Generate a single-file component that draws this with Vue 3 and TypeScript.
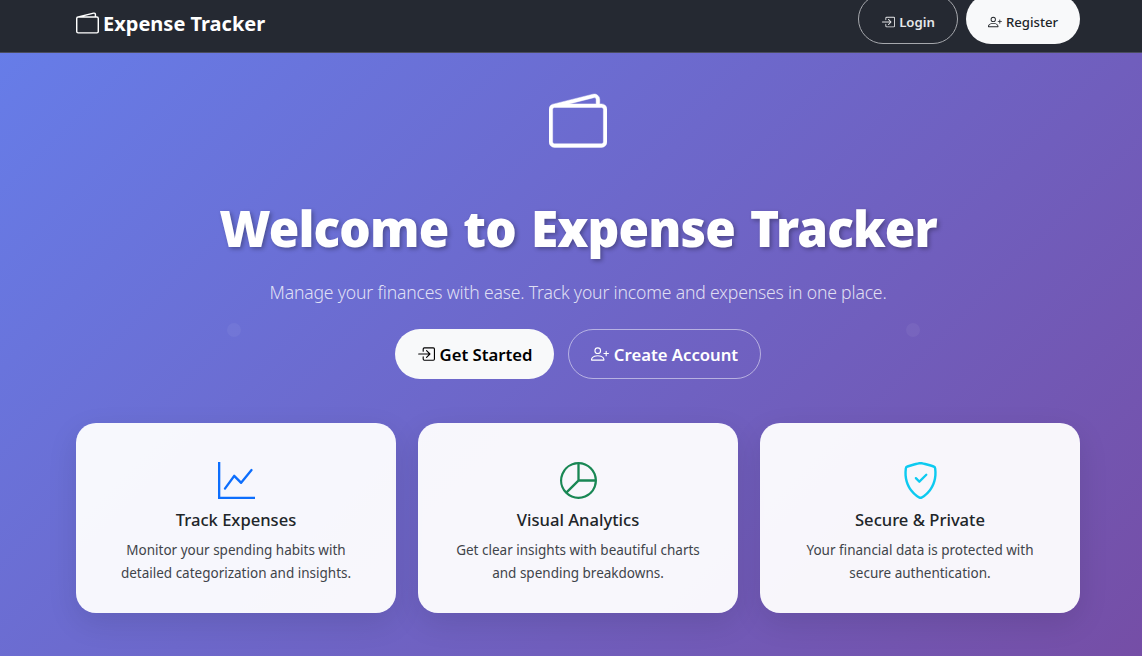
<script setup lang="ts">
const features = [
  { title: 'Track Expenses', lines: ['Monitor your spending habits with', 'detailed categorization and insights.'], icon: 'graph', color: '#0d6efd' },
  { title: 'Visual Analytics', lines: ['Get clear insights with beautiful charts', 'and spending breakdowns.'], icon: 'pie', color: '#198754' },
  { title: 'Secure & Private', lines: ['Your financial data is protected with', 'secure authentication.'], icon: 'shield', color: '#0dcaf0' },
]
</script>

<template>
  <div class="page">
    <nav class="nav">
      <div class="brand">
        <svg class="brand-icon" viewBox="0 0 16 16" fill="currentColor"><path d="M12.136.326A1.5 1.5 0 0 1 14 1.78V3h.5A1.5 1.5 0 0 1 16 4.5v9a1.5 1.5 0 0 1-1.5 1.5h-13A1.5 1.5 0 0 1 0 13.5v-9a1.5 1.5 0 0 1 1.432-1.499zM5.562 3H13V1.78a.5.5 0 0 0-.621-.484zM1.5 4a.5.5 0 0 0-.5.5v9a.5.5 0 0 0 .5.5h13a.5.5 0 0 0 .5-.5v-9a.5.5 0 0 0-.5-.5z"/></svg>
        <span>Expense Tracker</span>
      </div>
      <div class="nav-actions">
        <a class="btn-nav outline">
          <svg class="ic-sm" viewBox="0 0 16 16" fill="currentColor"><path fill-rule="evenodd" d="M6 3.5a.5.5 0 0 1 .5-.5h8a.5.5 0 0 1 .5.5v9a.5.5 0 0 1-.5.5h-8a.5.5 0 0 1-.5-.5v-2a.5.5 0 0 0-1 0v2A1.5 1.5 0 0 0 6.5 14h8a1.5 1.5 0 0 0 1.5-1.5v-9A1.5 1.5 0 0 0 14.5 2h-8A1.5 1.5 0 0 0 5 3.5v2a.5.5 0 0 0 1 0z"/><path fill-rule="evenodd" d="M11.854 8.354a.5.5 0 0 0 0-.708l-3-3a.5.5 0 1 0-.708.708L10.293 7.5H1.5a.5.5 0 0 0 0 1h8.793l-2.147 2.146a.5.5 0 0 0 .708.708z"/></svg>
          Login
        </a>
        <a class="btn-nav solid">
          <svg class="ic-sm" viewBox="0 0 16 16" fill="currentColor"><path d="M6 8a3 3 0 1 0 0-6 3 3 0 0 0 0 6m2-3a2 2 0 1 1-4 0 2 2 0 0 1 4 0m4 8c0 1-1 1-1 1H1s-1 0-1-1 1-4 6-4 6 3 6 4m-1-.004c-.001-.246-.154-.986-.832-1.664C9.516 10.68 8.289 10 6 10s-3.516.68-4.168 1.332c-.678.678-.83 1.418-.832 1.664z"/><path fill-rule="evenodd" d="M13.5 5a.5.5 0 0 1 .5.5V7h1.5a.5.5 0 0 1 0 1H14v1.5a.5.5 0 0 1-1 0V8h-1.5a.5.5 0 0 1 0-1H13V5.5a.5.5 0 0 1 .5-.5"/></svg>
          Register
        </a>
      </div>
    </nav>

    <main class="hero">
      <span class="dot dot-left"></span>
      <span class="dot dot-right"></span>
      <svg class="hero-icon" viewBox="0 0 16 16" fill="currentColor"><path d="M12.136.326A1.5 1.5 0 0 1 14 1.78V3h.5A1.5 1.5 0 0 1 16 4.5v9a1.5 1.5 0 0 1-1.5 1.5h-13A1.5 1.5 0 0 1 0 13.5v-9a1.5 1.5 0 0 1 1.432-1.499zM5.562 3H13V1.78a.5.5 0 0 0-.621-.484zM1.5 4a.5.5 0 0 0-.5.5v9a.5.5 0 0 0 .5.5h13a.5.5 0 0 0 .5-.5v-9a.5.5 0 0 0-.5-.5z"/></svg>
      <h1 class="title">Welcome to Expense Tracker</h1>
      <p class="lead">Manage your finances with ease. Track your income and expenses in one place.</p>
      <div class="cta">
        <a class="btn-lg solid">
          <svg class="ic-md" viewBox="0 0 16 16" fill="currentColor"><path fill-rule="evenodd" d="M6 3.5a.5.5 0 0 1 .5-.5h8a.5.5 0 0 1 .5.5v9a.5.5 0 0 1-.5.5h-8a.5.5 0 0 1-.5-.5v-2a.5.5 0 0 0-1 0v2A1.5 1.5 0 0 0 6.5 14h8a1.5 1.5 0 0 0 1.5-1.5v-9A1.5 1.5 0 0 0 14.5 2h-8A1.5 1.5 0 0 0 5 3.5v2a.5.5 0 0 0 1 0z"/><path fill-rule="evenodd" d="M11.854 8.354a.5.5 0 0 0 0-.708l-3-3a.5.5 0 1 0-.708.708L10.293 7.5H1.5a.5.5 0 0 0 0 1h8.793l-2.147 2.146a.5.5 0 0 0 .708.708z"/></svg>
          Get Started
        </a>
        <a class="btn-lg ghost">
          <svg class="ic-md" viewBox="0 0 16 16" fill="currentColor"><path d="M6 8a3 3 0 1 0 0-6 3 3 0 0 0 0 6m2-3a2 2 0 1 1-4 0 2 2 0 0 1 4 0m4 8c0 1-1 1-1 1H1s-1 0-1-1 1-4 6-4 6 3 6 4m-1-.004c-.001-.246-.154-.986-.832-1.664C9.516 10.68 8.289 10 6 10s-3.516.68-4.168 1.332c-.678.678-.83 1.418-.832 1.664z"/><path fill-rule="evenodd" d="M13.5 5a.5.5 0 0 1 .5.5V7h1.5a.5.5 0 0 1 0 1H14v1.5a.5.5 0 0 1-1 0V8h-1.5a.5.5 0 0 1 0-1H13V5.5a.5.5 0 0 1 .5-.5"/></svg>
          Create Account
        </a>
      </div>
      <section class="cards">
        <article v-for="f in features" :key="f.title" class="card">
          <svg class="card-icon" viewBox="0 0 16 16" fill="currentColor" :style="{ color: f.color }">
            <template v-if="f.icon === 'graph'">
              <path fill-rule="evenodd" d="M0 0h1v15h15v1H0zm14.817 3.113a.5.5 0 0 1 .07.704l-4.5 5.5a.5.5 0 0 1-.74.037L7.06 6.767l-3.656 5.027a.5.5 0 0 1-.808-.588l4-5.5a.5.5 0 0 1 .758-.06l2.609 2.61 4.15-5.073a.5.5 0 0 1 .704-.07"/>
            </template>
            <template v-else-if="f.icon === 'pie'">
              <path d="M7.5 1.018a7 7 0 0 0-4.79 11.566L7.5 7.793zm1 0V7.5h6.482A7 7 0 0 0 8.5 1.018M14.982 8.5H8.207l-4.79 4.79A7 7 0 0 0 14.982 8.5M0 8a8 8 0 1 1 16 0A8 8 0 0 1 0 8"/>
            </template>
            <template v-else>
              <path d="M5.338 1.59a61 61 0 0 0-2.837.856.48.48 0 0 0-.328.39c-.554 4.157.726 7.19 2.253 9.188a10.7 10.7 0 0 0 2.287 2.233c.346.244.652.42.893.533q.18.085.293.118a1 1 0 0 0 .101.025 1 1 0 0 0 .1-.025q.114-.034.294-.118c.24-.113.547-.29.893-.533a10.7 10.7 0 0 0 2.287-2.233c1.527-1.997 2.807-5.031 2.253-9.188a.48.48 0 0 0-.328-.39c-.651-.213-1.75-.56-2.837-.855C9.552 1.29 8.531 1.067 8 1.067c-.53 0-1.552.223-2.662.524zM5.072.56C6.157.265 7.31 0 8 0s1.843.265 2.928.56c1.11.3 2.229.655 2.887.87a1.54 1.54 0 0 1 1.044 1.262c.596 4.477-.787 7.795-2.465 9.99a11.8 11.8 0 0 1-2.517 2.453 7 7 0 0 1-1.048.625c-.28.132-.581.24-.829.24s-.548-.108-.829-.24a7 7 0 0 1-1.048-.625 11.8 11.8 0 0 1-2.517-2.453C1.928 10.487.545 7.169 1.141 2.692A1.54 1.54 0 0 1 2.185 1.43 63 63 0 0 1 5.072.56"/>
              <path d="M10.854 5.146a.5.5 0 0 1 0 .708l-3 3a.5.5 0 0 1-.708 0l-1.5-1.5a.5.5 0 1 1 .708-.708L7.5 7.793l2.646-2.647a.5.5 0 0 1 .708 0"/>
            </template>
          </svg>
          <h3 class="card-title">{{ f.title }}</h3>
          <p class="card-text"><span v-for="l in f.lines" :key="l" class="line">{{ l }}</span></p>
        </article>
      </section>
    </main>
  </div>
</template>

<style>
html, body { margin: 0; padding: 0; overflow: hidden; }
</style>

<style scoped>
.page {
  width: 1142px;
  height: 656px;
  overflow: hidden;
  font-family: "Noto Sans", "Open Sans", sans-serif;
  background: linear-gradient(135deg, #667eea 0%, #764ba2 106%);
  display: flex;
  flex-direction: column;
}
.nav {
  flex: none;
  height: 53px;
  box-sizing: border-box;
  border-bottom: 1px solid #4a4c5e;
  background: #252932;
  display: flex;
  align-items: flex-end;
  justify-content: space-between;
  padding: 0 62px 8px 76px;
}
.brand {
  display: flex;
  align-items: center;
  gap: 4px;
  color: #fff;
  font-size: 20px;
  font-weight: 700;
  align-self: flex-start;
  height: 46px;
}
.brand-icon { width: 23px; height: 23px; }
.nav-actions { display: flex; gap: 8px; }
.btn-nav {
  box-sizing: border-box;
  height: 50px;
  padding-top: 6px;
  border-radius: 25px;
  margin-top: -6px;
  display: inline-flex;
  align-items: center;
  justify-content: center;
  gap: 4px;
  font-size: 13.2px;
  font-weight: 600;
}
.btn-nav.outline { width: 100px; border: 1px solid #a6a8ad; color: #e7e8ea; }
.btn-nav.solid { width: 114px; background: #f8f9fa; color: #212529; font-weight: 500; }
.ic-sm { width: 14px; height: 14px; }
.ic-md { width: 18px; height: 18px; }
.hero {
  position: relative;
  flex: 1;
  display: flex;
  flex-direction: column;
  align-items: center;
  padding: 40px 62px 0 76px;
  color: #fff;
}
.dot {
  position: absolute;
  width: 14px;
  height: 14px;
  border-radius: 50%;
  background: rgba(255, 255, 255, 0.05);
  top: 270px;
}
.dot-left { left: 227px; }
.dot-right { left: 906px; }
.hero-icon { width: 58px; height: 58px; flex: none; stroke: currentColor; stroke-width: 0.12; }
.title {
  margin: 47px 0 0;
  font-size: 50px;
  line-height: 60px;
  font-weight: 900;
  letter-spacing: -0.87px;
  word-spacing: 3px;
  font-size: 49.5px;
  text-shadow: 2px 2px 4px rgba(0, 0, 0, 0.3);
  white-space: nowrap;
}
.lead {
  margin: 21px 0 0;
  font-size: 17.6px;
  line-height: 27px;
  font-weight: 300;
  letter-spacing: -0.18px;
  color: rgba(255, 255, 255, 0.8);
}
.cta { display: flex; gap: 14px; margin-top: 23px; }
.btn-lg {
  box-sizing: border-box;
  height: 50px;
  border-radius: 25px;
  display: inline-flex;
  align-items: center;
  justify-content: center;
  gap: 5px;
  font-size: 16.7px;
  font-weight: 600;
}
.btn-lg.solid { width: 159px; background: #f8f9fa; color: #000; }
.btn-lg.ghost { width: 193px; border: 1px solid rgba(255, 255, 255, 0.5); color: #fff; }
.cards {
  align-self: stretch;
  display: grid;
  grid-template-columns: repeat(3, 320px);
  gap: 22px;
  margin-top: 44px;
}
.card {
  height: 190px;
  box-sizing: border-box;
  padding-top: 39px;
  border-radius: 20px;
  background: rgba(255, 255, 255, 0.95);
  box-shadow: 0 10px 30px rgba(0, 0, 0, 0.1);
  display: flex;
  flex-direction: column;
  align-items: center;
  text-align: center;
}
.card-icon { width: 37px; height: 37px; flex: none; }
.card-title {
  margin: 10px 0 0;
  font-size: 16.6px;
  line-height: 22px;
  font-weight: 500;
  color: #212529;
}
.card-text {
  margin: 8px 0 0;
  font-size: 13.5px;
  line-height: 23px;
  color: #3f444a;
}
.line { display: block; }
</style>
